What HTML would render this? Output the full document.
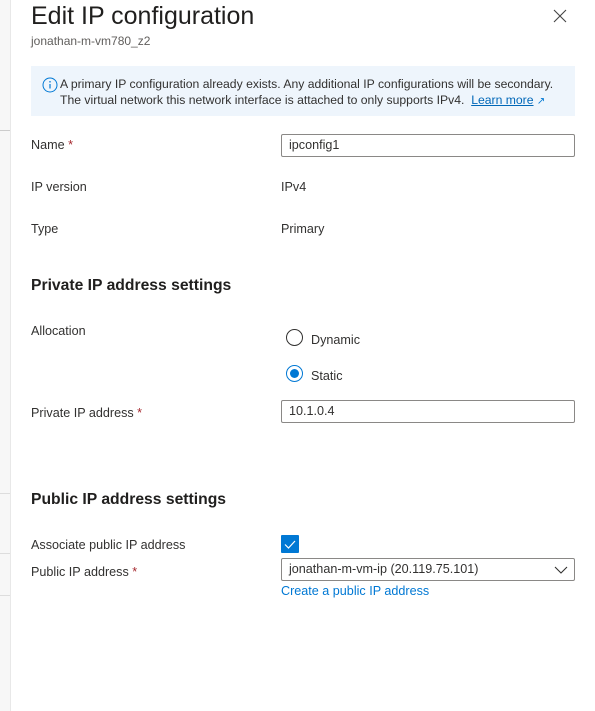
<!DOCTYPE html><html><head><style>
body{margin:0;width:595px;height:711px;background:#fff;font-family:"Liberation Sans",sans-serif;color:#323130;position:relative;overflow:hidden}
.a{position:absolute;white-space:nowrap}
.l{font-size:12.6px}
.s{color:#a4262c}
.in{position:absolute;left:281px;width:285px;height:21px;border:1px solid #8a8886;border-radius:2px;font-size:12.6px;line-height:21px;padding-left:7px}
.h{font-size:15.7px;font-weight:bold;color:#201f1e}
</style></head><body>
<div class="a" style="left:0;top:0;width:10px;height:711px;background:#f7f7f7;border-right:1px solid #e8e8e8"></div>
<div class="a" style="left:0;top:130px;width:10px;border-top:1px solid #ccc"></div>
<div class="a" style="left:0;top:493px;width:10px;border-top:1px solid #ddd"></div>
<div class="a" style="left:0;top:553px;width:10px;border-top:1px solid #ddd"></div>
<div class="a" style="left:0;top:595px;width:10px;border-top:1px solid #ddd"></div>
<div class="a" style="left:31px;top:2px;font-size:25px;color:#201f1e">Edit IP configuration</div>
<svg class="a" style="left:553px;top:9px" width="14" height="14"><path d="M1 1L13 13M13 1L1 13" stroke="#444" stroke-width="1.1"/></svg>
<div class="a" style="left:31px;top:34px;font-size:12px;color:#605e5c">jonathan-m-vm780_z2</div>
<div class="a" style="left:31px;top:66px;width:544px;height:50px;background:#eef5fc"></div>
<svg class="a" style="left:42px;top:77px" width="16" height="16"><circle cx="8" cy="8" r="7" fill="none" stroke="#0078d4" stroke-width="1"/><path d="M8 7v4.5" stroke="#0078d4" stroke-width="1.2"/><circle cx="8" cy="4.8" r=".8" fill="#0078d4"/></svg>
<div class="a" style="left:60px;top:76px;font-size:12.2px;line-height:16px;color:#323130">A primary IP configuration already exists. Any additional IP configurations will be secondary.<br>The virtual network this network interface is attached to only supports IPv4. &nbsp;<span style="color:#0067b8;text-decoration:underline">Learn more</span> <span style="color:#0078d4;font-size:10px">↗</span></div>
<div class="a l" style="left:31px;top:138px">Name <span class="s">*</span></div>
<div class="in" style="top:134px">ipconfig1</div>
<div class="a l" style="left:31px;top:180px">IP version</div>
<div class="a l" style="left:281px;top:180px">IPv4</div>
<div class="a l" style="left:31px;top:222px">Type</div>
<div class="a l" style="left:281px;top:222px">Primary</div>
<div class="a h" style="left:31px;top:277px">Private IP address settings</div>
<div class="a l" style="left:31px;top:324px">Allocation</div>
<div class="a" style="left:286px;top:329px;width:15px;height:15px;border:1px solid #323130;border-radius:50%"></div>
<div class="a l" style="left:311px;top:333px">Dynamic</div>
<div class="a" style="left:286px;top:365px;width:15px;height:15px;border:1px solid #0078d4;border-radius:50%"></div>
<div class="a" style="left:290px;top:369px;width:9px;height:9px;background:#0078d4;border-radius:50%"></div>
<div class="a l" style="left:311px;top:369px">Static</div>
<div class="a l" style="left:31px;top:406px">Private IP address <span class="s">*</span></div>
<div class="in" style="top:400px">10.1.0.4</div>
<div class="a h" style="left:31px;top:491px">Public IP address settings</div>
<div class="a l" style="left:31px;top:538px">Associate public IP address</div>
<div class="a" style="left:281px;top:535px;width:18px;height:18px;background:#0078d4;border-radius:1px"></div>
<svg class="a" style="left:281px;top:535px" width="18" height="18"><path d="M4 9.5l3.5 3.5L14 6" fill="none" stroke="#fff" stroke-width="1.2"/></svg>
<div class="a l" style="left:31px;top:565px">Public IP address <span class="s">*</span></div>
<div class="in" style="top:558px">jonathan-m-vm-ip (20.119.75.101)</div>
<svg class="a" style="left:554px;top:565px" width="14" height="10"><path d="M1 2l6 6 6-6" fill="none" stroke="#323130" stroke-width="1.1"/></svg>
<div class="a l" style="left:281px;top:584px;color:#0078d4">Create a public IP address</div>
</body></html>
